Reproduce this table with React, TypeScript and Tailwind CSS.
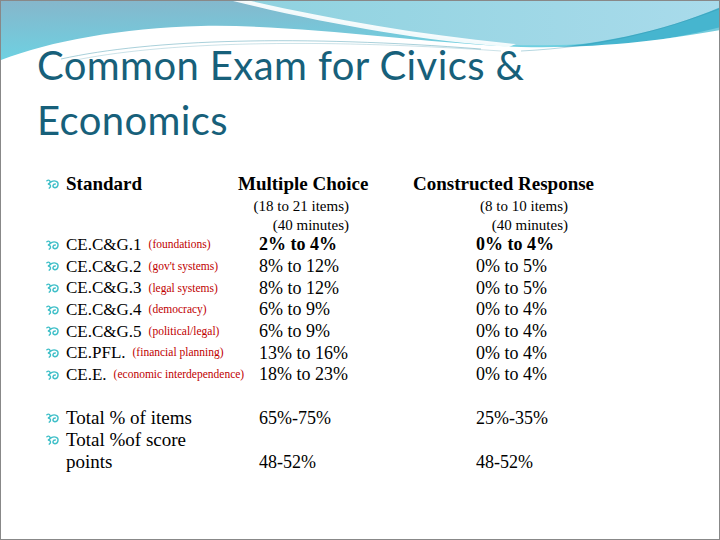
import React from 'react';

const serif = { fontFamily: '"Liberation Serif", "Times New Roman", serif' };

const Bullet = () => (
  <svg width="15" height="12" viewBox="0 0 16 12" className="shrink-0">
    <path
      d="M2 2.5 C4 1, 6.5 2.5, 5 5 C4 6, 3 6, 3 6 C6 6, 7 9, 4.5 10.5 M5 5 C7 3, 10 2, 12.5 3.5 C15 5, 14 10, 10.5 10 C7.5 9.5, 8 6, 11 6"
      fill="none"
      stroke="#3fbfc8"
      strokeWidth="1.5"
      strokeLinecap="round"
    />
  </svg>
);

const rows = [
  { code: 'CE.C&G.1', note: '(foundations)', mc: '2% to 4%', cr: '0% to 4%', bold: true },
  { code: 'CE.C&G.2', note: "(gov't systems)", mc: '8% to 12%', cr: '0% to 5%' },
  { code: 'CE.C&G.3', note: '(legal systems)', mc: '8% to 12%', cr: '0% to 5%' },
  { code: 'CE.C&G.4', note: '(democracy)', mc: '6% to 9%', cr: '0% to 4%' },
  { code: 'CE.C&G.5', note: '(political/legal)', mc: '6% to 9%', cr: '0% to 4%' },
  { code: 'CE.PFL.', note: '(financial planning)', mc: '13% to 16%', cr: '0% to 4%' },
  { code: 'CE.E.', note: '(economic interdependence)', mc: '18% to 23%', cr: '0% to 4%' },
];

const Waves = () => (
  <svg width="720" height="62" viewBox="0 0 720 62" className="absolute top-0 left-0">
    <defs>
      <linearGradient id="bg" x1="0" y1="0" x2="0.25" y2="1">
        <stop offset="0" stopColor="#86b6cb" />
        <stop offset="1" stopColor="#6bd4e4" />
      </linearGradient>
      <linearGradient id="lite" x1="0" y1="0" x2="1" y2="0">
        <stop offset="0" stopColor="#8fd2df" />
        <stop offset="1" stopColor="#a9dbeb" />
      </linearGradient>
    </defs>
    <rect x="0" y="0" width="720" height="62" fill="url(#bg)" />
    <path d="M240 0 L720 0 L720 20 C640 40, 580 46, 510 44 C420 36, 320 20, 240 0 Z" fill="url(#lite)" />
    <path d="M232 0 L250 0 C330 18, 420 34, 515 43 L508 46 C420 40, 320 22, 232 0 Z" fill="#ffffff" opacity="0.9" />
    <path d="M430 50 C560 54, 650 36, 720 6 L720 26 C650 44, 560 54, 430 50 Z" fill="#46b5cf" />
    <path d="M0 62 L0 59 C50 40, 120 27, 200 25 C300 23, 420 42, 520 46 C600 48, 670 38, 720 29 L720 62 Z" fill="#ffffff" />
    <path d="M60 58 C150 38, 300 34, 480 48" fill="none" stroke="#4f9fb3" strokeWidth="0.7" opacity="0.7" />
    <path d="M70 60 C160 41, 310 37, 500 50" fill="none" stroke="#4f9fb3" strokeWidth="0.6" opacity="0.5" />
    <path d="M520 50 C600 46, 660 30, 718 8" fill="none" stroke="#2f8fa8" strokeWidth="0.6" opacity="0.6" />
  </svg>
);

export default function App() {
  return (
    <div className="relative w-[720px] h-[540px] overflow-hidden bg-white border border-[#888888]">
      <Waves />
      <div className="relative pt-[37px] pl-[36px]">
        <h1
          className="text-[40px] leading-[55px] tracking-[0.4px] text-[#17607a]"
          style={{ fontFamily: 'Lato, "Open Sans", sans-serif' }}
        >
          Common Exam for Civics &amp;
          <br />
          Economics
        </h1>
      </div>

      <div className="relative pl-[44px] text-black" style={serif}>
        {/* headers */}
        <div className="flex items-center mt-[25px] h-[22px] text-[19px] font-bold">
          <div className="flex items-center gap-[6px] w-[193px]">
            <Bullet />
            <span>Standard</span>
          </div>
          <div className="w-[175px]">Multiple Choice</div>
          <div>Constructed Response</div>
        </div>
        <div className="flex mt-[2px] text-[15px] leading-[19px]">
          <div className="w-[304px] text-right">
            <div>(18 to 21 items)</div>
            <div>(40 minutes)</div>
          </div>
          <div className="w-[219px] text-right">
            <div>(8 to 10 items)</div>
            <div>(40 minutes)</div>
          </div>
        </div>

        {/* standards */}
        <div className="-mt-[1px]">
          {rows.map((r) => (
            <div key={r.code} className="flex items-center h-[21.67px]">
              <div className="flex items-center gap-[6px] w-[214px] whitespace-nowrap">
                <Bullet />
                <span className="text-[17px]">{r.code}</span>
                <span className="text-[11.5px] text-[#c00000] ml-[1px]">{r.note}</span>
              </div>
              <div className={`w-[217px] text-[18px] ${r.bold ? 'font-bold' : ''}`}>{r.mc}</div>
              <div className={`text-[18px] ${r.bold ? 'font-bold' : ''}`}>{r.cr}</div>
            </div>
          ))}
        </div>

        {/* totals */}
        <div className="mt-[21px] text-[18px] leading-[22px]">
          <div className="flex items-center h-[22px]">
            <div className="flex items-center gap-[6px] w-[214px]">
              <Bullet />
              <span className="text-[19px]">Total % of items</span>
            </div>
            <div className="w-[217px]">65%-75%</div>
            <div>25%-35%</div>
          </div>
          <div className="flex items-center h-[22px]">
            <div className="flex items-center gap-[6px] w-[214px]">
              <Bullet />
              <span className="text-[19px]">Total %of score</span>
            </div>
          </div>
          <div className="flex items-center h-[22px]">
            <div className="w-[214px] pl-[21px] text-[19px]">points</div>
            <div className="w-[217px]">48-52%</div>
            <div>48-52%</div>
          </div>
        </div>
      </div>
    </div>
  );
}
